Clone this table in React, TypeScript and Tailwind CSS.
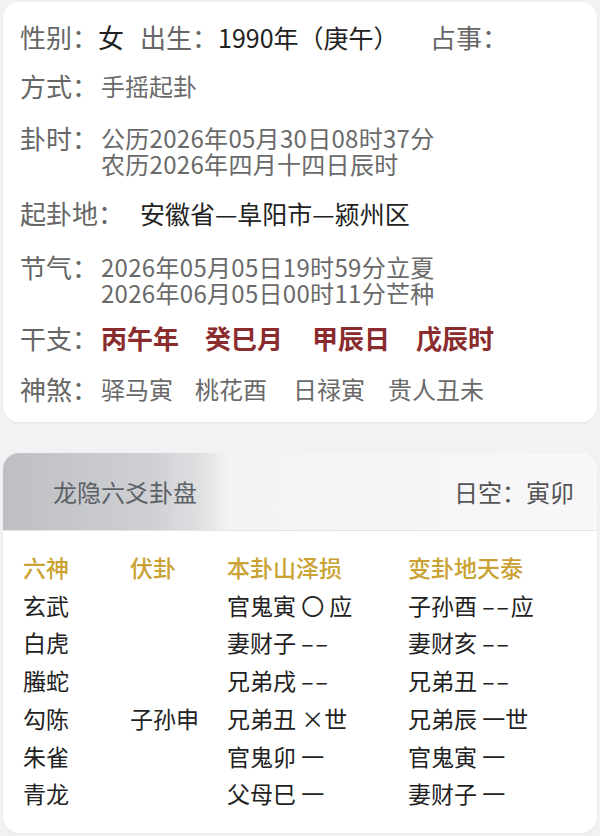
import React from "react";

const font = { fontFamily: '"Noto Sans CJK SC", "Noto Sans", sans-serif' };

function Row({ label, children, className = "" }: { label: string; children: React.ReactNode; className?: string }) {
  return (
    <div className={`flex items-start ${className}`}>
      <div className="w-[81px] shrink-0 text-[26px] leading-[26px] text-[#666] whitespace-nowrap">{label}</div>
      <div className="flex-1">{children}</div>
    </div>
  );
}

function Yao({ s }: { s: string }) {
  if (s === "yin") return <span className="tracking-[2px]">––</span>;
  return <span>{s}</span>;
}

type Cell = { t: string; y?: string; e?: string };

const rows: [string, string, Cell, Cell][] = [
  ["玄武", "", { t: "官鬼寅 ", y: "〇", e: " 应" }, { t: "子孙酉 ", y: "yin", e: "应" }],
  ["白虎", "", { t: "妻财子 ", y: "yin" }, { t: "妻财亥 ", y: "yin" }],
  ["螣蛇", "", { t: "兄弟戌 ", y: "yin" }, { t: "兄弟丑 ", y: "yin" }],
  ["勾陈", "子孙申", { t: "兄弟丑 ", y: "×", e: "世" }, { t: "兄弟辰 ", y: "一", e: "世" }],
  ["朱雀", "", { t: "官鬼卯 ", y: "一" }, { t: "官鬼寅 ", y: "一" }],
  ["青龙", "", { t: "父母巳 ", y: "一" }, { t: "妻财子 ", y: "一" }],
];

function C({ c }: { c: Cell }) {
  return (
    <span className="whitespace-pre">
      {c.t}
      {c.y && <Yao s={c.y} />}
      {c.e}
    </span>
  );
}

export default function App() {
  return (
    <div style={font} className="w-[600px] h-[836px] bg-[#f2f2f4] pt-[2px] px-[3px] overflow-hidden">
      <div className="bg-white rounded-[16px] pl-[17px] pr-4 pt-[22px] pb-[20px] shadow-[0_1px_3px_rgba(0,0,0,0.05)]">
        <div className="flex items-start text-[26px] leading-[26px] whitespace-nowrap">
          <span className="text-[#666] w-[78px]">性别：</span>
          <span className="text-[#222] w-[42px]">女</span>
          <span className="text-[#666] w-[78px]">出生：</span>
          <span className="text-[#222] w-[212px] text-[25px]">1990年（庚午）</span>
          <span className="text-[#666]">占事：</span>
        </div>
        <Row label="方式：" className="mt-[23px]">
          <div className="text-[24px] leading-[26px] text-[#6a6a6a]">手摇起卦</div>
        </Row>
        <Row label="卦时：" className="mt-[26px]">
          <div className="text-[24px] leading-[26px] text-[#6a6a6a] tracking-[0.3px] whitespace-nowrap">
            <div>公历2026年05月30日08时37分</div>
            <div>农历2026年四月十四日辰时</div>
          </div>
        </Row>
        <div className="flex items-start mt-[23px]">
          <div className="w-[120px] shrink-0 text-[26px] leading-[26px] text-[#666]">起卦地：</div>
          <div className="text-[25px] leading-[26px] text-[#222] whitespace-nowrap">安徽省—阜阳市—颍州区</div>
        </div>
        <Row label="节气：" className="mt-[28px]">
          <div className="text-[24px] leading-[26px] text-[#6a6a6a] tracking-[0.3px] whitespace-nowrap">
            <div>2026年05月05日19时59分立夏</div>
            <div>2026年06月05日00时11分芒种</div>
          </div>
        </Row>
        <Row label="干支：" className="mt-[19px]">
          <div className="flex text-[26px] leading-[26px] font-bold text-[#8a2b2e] whitespace-nowrap">
            <span className="w-[104px]">丙午年</span>
            <span className="w-[107px]">癸巳月</span>
            <span className="w-[104px]">甲辰日</span>
            <span>戊辰时</span>
          </div>
        </Row>
        <Row label="神煞：" className="mt-[25px]">
          <div className="flex text-[24px] leading-[26px] text-[#6a6a6a] whitespace-nowrap">
            <span className="w-[94px]">驿马寅</span>
            <span className="w-[98px]">桃花酉</span>
            <span className="w-[95px]">日禄寅</span>
            <span>贵人丑未</span>
          </div>
        </Row>
      </div>

      <div className="mt-[31px] bg-white rounded-[16px] overflow-hidden shadow-[0_1px_3px_rgba(0,0,0,0.05)]">
        <div className="h-[78px] flex items-center justify-between pl-[50px] pr-[23px] border-b border-[#e4e4e7] bg-[linear-gradient(90deg,#bebfc3_0%,#cfd0d3_25%,#dedfe1_33%,#f3f3f5_38%,#f8f8fa_100%)]">
          <span className="text-[24px] text-[#5d6067]">龙隐六爻卦盘</span>
          <span className="text-[24px] text-[#555]">日空：寅卯</span>
        </div>
        <div className="pl-[20px] pt-[18px] pb-[20px] text-[23px] leading-[37.7px]">
          <div className="grid grid-cols-[107px_97px_181px_1fr] text-[#c9a233] font-medium">
            <span>六神</span>
            <span>伏卦</span>
            <span>本卦山泽损</span>
            <span>变卦地天泰</span>
          </div>
          {rows.map((r, i) => (
            <div key={i} className="grid grid-cols-[107px_97px_181px_1fr] text-[#222]">
              <span>{r[0]}</span>
              <span>{r[1]}</span>
              <C c={r[2]} />
              <C c={r[3]} />
            </div>
          ))}
        </div>
      </div>
    </div>
  );
}
